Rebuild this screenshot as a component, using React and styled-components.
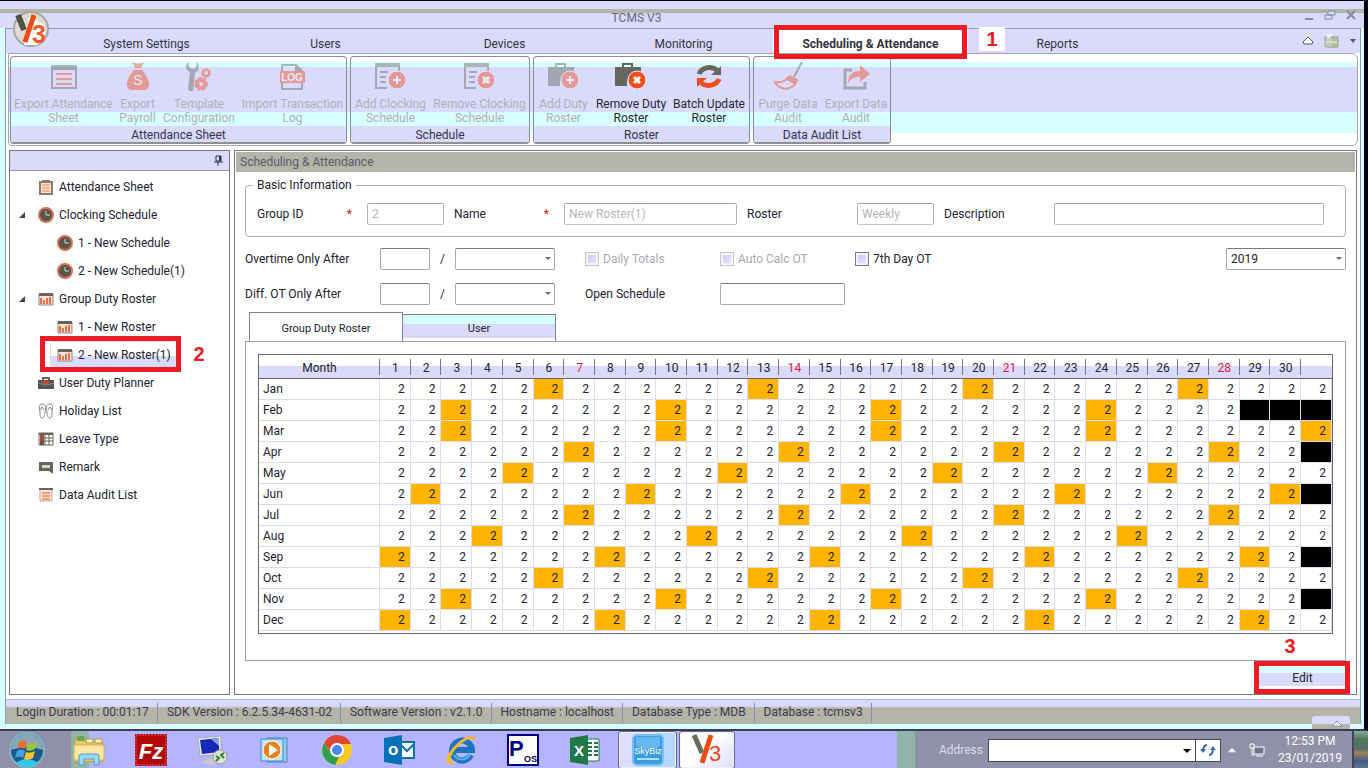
import React, { useState } from "react";
import styled, { createGlobalStyle } from "styled-components";

const GlobalStyle = createGlobalStyle`
  * { box-sizing: border-box; }
  body {
    margin: 0;
    background: #fff;
  }
  body, button, input, select, table {
    font-family: Roboto, "Noto Sans", sans-serif;
    font-size: 12px;
    line-height: 14px;
    color: #222230;
  }
  button { padding: 0; border: 0; background: none; }
`;

const Desktop = styled.div`
  min-height: 100vh;
  display: flex;
  flex-direction: column;
`;

const Window = styled.div`
  flex: 1;
  display: flex;
  flex-direction: column;
  position: relative;
  border-top: 1px solid #000;
  border-right: 4px solid #000010;
  border-bottom: 2px solid #3c3c58;
  background: #d8ffff;
`;

const TitleBar = styled.header`
  height: 27px;
  display: flex;
  align-items: flex-end;
  padding: 0 7px 1px 0;
  background: linear-gradient(#dadafc 8px, #b4b4a8 8px, #b4b4a8 12px, #c8dce8 12px, #dadafc 14px);
`;

const Title = styled.h1`
  flex: 1;
  margin: 0;
  text-align: center;
  font-size: 12px;
  line-height: 18px;
  font-weight: normal;
  color: #66667a;
`;

const WindowButtons = styled.div`
  width: 84px;
  display: flex;
  justify-content: flex-end;
  gap: 9px;
  padding-bottom: 6px;
  button { height: 12px; }
  svg { display: block; }
`;

const Logo = styled.div`
  position: absolute;
  left: 12px;
  top: 8px;
  z-index: 2;
`;

const Frame = styled.div`
  flex: 1;
  display: flex;
  flex-direction: column;
  margin: 0 3px 5px 5px;
  border: solid #9898ac;
  border-width: 1px 1px 0 1px;
  background: #fff;
`;

const Nav = styled.nav`
  display: flex;
  height: 24px;
  padding-left: 51px;
  background: #dadafc;
`;

const NavTab = styled.button`
  position: relative;
  width: ${(p) => (p.$active ? "195px" : "179px")};
  padding-top: 5px;
  font-weight: ${(p) => (p.$active ? "bold" : "normal")};
  background: ${(p) => (p.$active ? "#fff" : "none")};
  color: #33333f;
`;

const RedFrame = styled.span`
  position: absolute;
  inset: ${(p) => p.$inset};
  border: 5px solid #ed1c24;
  z-index: 1;
  pointer-events: none;
`;

const Callout = styled.span`
  position: absolute;
  top: ${(p) => p.$top};
  left: ${(p) => p.$left};
  width: 26px;
  font: bold 20px/24px "Liberation Sans", Arial, sans-serif;
  text-align: center;
  color: #ed1c24;
  background: #fff;
`;

const NavTools = styled.div`
  margin-left: auto;
  display: flex;
  align-items: center;
  gap: 10px;
  padding-right: 3px;
`;

const Ribbon = styled.div`
  display: flex;
  gap: 3px;
  height: 93px;
  margin: 0 2px;
  padding: 2px 1px 1px;
  border: 1px solid #a4a4b4;
  border-radius: 0 6px 6px 4px;
  background: linear-gradient(#fff 8px, #d8ffff 8px, #d8ffff 13px, #dadafc 13px, #dadafc 58px, #d8ffff 58px, #d8ffff 79px, #fff 79px);
`;

const RibbonGroup = styled.section`
  display: flex;
  flex-direction: column;
  border: 1px solid #8c8c98;
  border-bottom: 2px solid #90908c;
  border-radius: 4px;
  h2 {
    margin: 0;
    padding-top: 2px;
    font-size: 12px;
    line-height: 14px;
    font-weight: normal;
    text-align: center;
    background: #dadafc;
    color: #33334a;
  }
`;

const RibbonRow = styled.div`
  flex: 1;
  display: flex;
`;

const RibbonButton = styled.button`
  width: ${(p) => p.$w}px;
  display: flex;
  flex-direction: column;
  align-items: center;
  gap: 4px;
  padding-top: 4px;
  white-space: pre;
  color: #26262e;
  &:disabled { color: #b0b0b4; }
  &:disabled svg { opacity: 0.45; }
`;

const Main = styled.main`
  flex: 1;
  display: flex;
  gap: 4px;
  padding: 4px 3px;
`;

const Panel = styled.div`
  border: 1px solid #77778c;
  background: #fff;
`;

const Sidebar = styled(Panel)`
  width: 221px;
  flex: none;
`;

const SidebarTop = styled.div`
  height: 20px;
  display: flex;
  justify-content: flex-end;
  padding: 4px 6px;
  border-bottom: 1px solid #9898ac;
  background: #dadafc;
`;

const Tree = styled.ul`
  list-style: none;
  margin: 2px 0 0;
  padding: 0 0 0 8px;
`;

const TreeItem = styled.li`
  position: relative;
  height: 28px;
  display: flex;
  align-items: center;
  padding-left: ${(p) => (p.$child ? 33 : 0)}px;
`;

const Arrow = styled.span`
  width: 20px;
  svg { display: block; }
`;

const TreeButton = styled.button`
  height: 27px;
  display: flex;
  align-items: center;
  gap: 5px;
  padding: 0 5px 0 ${(p) => (p.$child ? 6 : 0)}px;
  border-radius: 4px;
  background: ${(p) => (p.$on ? "linear-gradient(#fff 14px, #dadafc 14px)" : "none")};
  box-shadow: ${(p) => (p.$on ? "0 0 0 1px #dcdce8" : "none")};
`;

const Content = styled(Panel)`
  flex: 1;
  min-width: 0;
  padding: 1px;
  display: flex;
  flex-direction: column;
`;

const ContentTitle = styled.h2`
  margin: 0;
  padding: 1px 4px 0;
  font-size: 12px;
  line-height: 19px;
  font-weight: normal;
  background: #b4b4a8;
  color: #5a5a6c;
`;

const ContentBody = styled.div`
  flex: 1;
  display: flex;
  flex-direction: column;
  padding: 5px 9px 0;
`;

const BasicInfo = styled.fieldset`
  margin: 0;
  padding: 9px 21px 11px 1px;
  border: 1px solid #b0b0b4;
  border-radius: 4px;
  legend {
    margin-left: 6px;
    padding: 0 4px;
    line-height: 17px;
  }
`;

const InfoGrid = styled.div`
  display: grid;
  grid-template-columns: 120px 77px 120px 173px 120px 77px 120px 1fr;
  align-items: center;
  label {
    display: flex;
    justify-content: space-between;
    padding: 0 15px 0 10px;
  }
  em { color: #e01020; font-style: normal; }
`;

const TextBox = styled.input`
  width: 100%;
  min-width: 0;
  height: 22px;
  padding: 0 4px;
  border: 1px solid #a8a8ac;
  border-top-color: #77777c;
  border-radius: 2px;
  background: #fff;
  &:disabled {
    color: #b4b4bc;
    border-color: #a0a0a4 #b4b4ac #c8c8b4;
  }
`;

const OpenScheduleBox = styled(TextBox)`
  width: 125px;
`;

const OptionGrid = styled.div`
  display: grid;
  grid-template-columns: 135px 50px 25px 100px 30px 135px 135px 1fr 120px;
  row-gap: 13px;
  align-items: center;
  margin-top: 11px;
`;

const Slash = styled.span`
  text-align: center;
`;

const SelectBox = styled.div`
  position: relative;
  select {
    appearance: none;
    width: 100%;
    height: 22px;
    padding: 0 4px;
    border: 1px solid #a8a8ac;
    border-top-color: #77777c;
    border-radius: 2px;
    background: #fff;
    display: block;
  }
  &::after {
    content: "";
    position: absolute;
    right: 4px;
    top: 9px;
    border: 3px solid transparent;
    border-top-color: #66666c;
    pointer-events: none;
  }
`;

const Check = styled.label`
  display: flex;
  align-items: center;
  gap: 4px;
  color: ${(p) => (p.$off ? "#a8a8b0" : "#222230")};
  input {
    appearance: none;
    width: 14px;
    height: 14px;
    margin: 0;
    border: 1px solid ${(p) => (p.$off ? "#c8c8c0" : "#77778c")};
    background: linear-gradient(135deg, #c8c8f4, #e8e8ff);
    box-shadow: inset 0 0 0 2px #f4f4fc;
  }
`;

const TabStrip = styled.div`
  display: flex;
  align-items: flex-end;
  height: 29px;
  margin-top: 7px;
  padding-left: 4px;
`;

const Tab = styled.button`
  width: 154px;
  height: ${(p) => (p.$on ? 30 : 27)}px;
  margin-bottom: ${(p) => (p.$on ? -1 : 0)}px;
  padding-top: 2px;
  font-size: 11px;
  border: 1px solid #80809c;
  border-bottom: 0;
  background: ${(p) => (p.$on ? "#fff" : "linear-gradient(#d8ffff 9px, #dadafc 9px, #dadafc 23px, #fff 23px)")};
  & + & { margin-left: -1px; }
`;

const TabBody = styled.div`
  flex: 1;
  padding: 12px 12px 26px;
  border: 1px solid #9c9cb4;
`;

const RosterFrame = styled.div`
  padding-bottom: 2px;
  border: 1px solid #66666c;
`;

const Roster = styled.table`
  width: 100%;
  table-layout: fixed;
  border-collapse: separate;
  border-spacing: 0;
  thead th {
    height: 24px;
    padding: 2px 0 0;
    font-weight: normal;
    border-bottom: 1px solid #66666c;
    background: linear-gradient(#77777f, #77777f) right 4px / 1px 16px no-repeat,
      linear-gradient(#fff 11px, #dadafc 11px);
  }
  thead th:last-child { background: linear-gradient(#fff 11px, #dadafc 11px); }
  th:first-child { width: 121px; }
  tbody th {
    padding: 0 4px;
    text-align: left;
    font-weight: normal;
    border: solid #dcdcec;
    border-width: 0 1px 1px 0;
  }
`;

const DayHead = styled.th`
  color: ${(p) => (p.$red ? "#e01838" : "#222230")};
`;

const Day = styled.td`
  height: 21px;
  padding: 0 5px 0 0;
  text-align: right;
  border: solid #dcdcec;
  border-width: 0 1px 1px 0;
  background: ${(p) => (p.$none ? "#000" : p.$rest ? "#ffb400" : "#fff")};
`;

const Actions = styled.div`
  display: flex;
  justify-content: flex-end;
  padding: 6px 0 4px;
`;

const EditWrap = styled.div`
  position: relative;
`;

const EditButton = styled.button`
  display: block;
  width: 87px;
  height: 22px;
  background: linear-gradient(#d8ffff 6px, #dadafc 6px, #dadafc 19px, #fff 19px);
`;

const StatusBar = styled.footer`
  position: relative;
  display: flex;
  height: 25px;
  padding-left: 1px;
  border-top: 1px solid #b8b8c4;
  background: linear-gradient(#dadafc 6px, #b4b4a8 8px);
  color: #3a3a48;
  span {
    height: 20px;
    margin-top: 3px;
    padding: 2px 8px 0 9px;
    border-right: 1px solid #8c8ca8;
  }
`;

const StatusTab = styled.button`
  position: absolute;
  right: 10px;
  bottom: -5px;
  width: 38px;
  height: 13px;
  border-radius: 3px 3px 0 0;
  background: linear-gradient(#dadafc 8px, #b4b4a8 8px);
  svg { display: block; margin-left: 19px; }
`;

const Taskbar = styled.div`
  height: 38px;
  flex: none;
  display: flex;
  background: #b4b4ff;
`;

const Start = styled.button`
  width: 89px;
  padding-left: 8px;
  text-align: left;
  background: linear-gradient(90deg, #9090a8 71px, #90b4a8 71px);
  svg { display: block; }
`;

const Pinned = styled.button`
  width: 62px;
  display: flex;
  align-items: center;
  justify-content: center;
`;

const PinnedList = styled.div`
  display: flex;
  flex: 1;
  margin-left: -31px;
`;

const Running = styled.button`
  width: ${(p) => (p.$front ? 56 : 59)}px;
  margin-left: 2px;
  display: flex;
  align-items: center;
  justify-content: center;
  border: 1px solid #66668c;
  border-radius: 3px;
  box-shadow: inset 0 0 0 1px #f0f0ff;
  background: ${(p) => (p.$front ? "linear-gradient(135deg, #fff 45%, #dcdcff)" : "linear-gradient(115deg, #dcdcff 50%, #b4d8ff 52%)")};
`;

const Tray = styled.div`
  display: flex;
  align-items: center;
  padding-left: 42px;
  background: linear-gradient(90deg, #90b4a8 18px, #9090a8 18px);
  color: #fff;
  label { color: #dcdcf0; margin-right: 5px; }
`;

const AddressBox = styled.div`
  position: relative;
  display: flex;
  height: 23px;
  border: 1px solid #44445c;
  background: #fff;
  input { width: 206px; border: 0; padding: 0 4px; }
  button { width: 25px; border-left: 1px solid #44445c; }
  svg { display: block; margin: auto; }
  &::after {
    content: "";
    position: absolute;
    right: 29px;
    top: 9px;
    border: 4px solid transparent;
    border-top-color: #000;
  }
`;

const TrayIcon = styled.button`
  margin-left: ${(p) => p.$gap}px;
  svg { display: block; }
`;

const Clock = styled.time`
  width: 84px;
  margin-left: 3px;
  text-align: center;
  line-height: 17px;
  white-space: pre-line;
`;

const ShowDesktop = styled.button`
  align-self: stretch;
  width: 16px;
  border-left: 2px solid #44445c;
  background: linear-gradient(#90a8a8, #4c7c58 8px, #5a6c70 18px, #98845c 22px, #48588c 30px, #5c7c88);
`;

const D = "#66665c";
const R = "#ee4e1c";

// 32px ribbon drawings
const ribbonArt = {
  sheet: (
    <>
      <path d="M4 5h24v22H4z" fill="none" stroke={D} strokeWidth="2" />
      <path d="M3 4h26v5H3z" fill={D} />
      <path d="M8 13h16M8 18h16M8 23h16" stroke={R} strokeWidth="2" />
    </>
  ),
  payroll: (
    <>
      <path d="M10 1q6 3 12 0l-3 6h-6z" fill={R} />
      <path d="M12 9h8c4 5 7 9 7 15 0 4-3 5-6 5H11c-3 0-6-1-6-5 0-6 3-10 7-15z" fill={R} />
      <text x="16" y="24" fontSize="14" textAnchor="middle" fill="#fff" fontFamily="Liberation Sans">S</text>
    </>
  ),
  tools: (
    <>
      <path d="M5 1c-3 3-3 8 2 10l-2 17q1 3 5 2l2-18c4-2 5-7 2-11l-1 6-4 1-3-2z" fill={D} />
      <circle cx="23" cy="12" r="3" fill="none" stroke={R} strokeWidth="2" />
      <circle cx="23" cy="12" r="4" fill="none" stroke={R} strokeWidth="2" strokeDasharray="2 1" />
      <circle cx="18" cy="23" r="4" fill="none" stroke={R} strokeWidth="4" />
      <circle cx="18" cy="23" r="6" fill="none" stroke={R} strokeWidth="2" strokeDasharray="3 2" />
    </>
  ),
  log: (
    <>
      <path d="M5 11V4h14l6 6M5 20v8h20v-8" fill="none" stroke={D} strokeWidth="2" />
      <path d="M18 4v7h7z" fill={D} />
      <rect x="3" y="10" width="25" height="12" rx="1" fill={R} />
      <text x="15" y="20" fontSize="10" fontWeight="bold" textAnchor="middle" fill="#fff" fontFamily="Liberation Sans">LOG</text>
    </>
  ),
  schedule: (
    <>
      <path d="M1 5v22h11M24 4v6" fill="none" stroke={D} strokeWidth="2" />
      <path d="M0 2h25v4H0z" fill={D} />
      <path d="M5 11h8M5 16h6M5 21h6" stroke={D} strokeWidth="2" />
    </>
  ),
  bag: (
    <>
      <path d="M8 7V3h9v4" fill="none" stroke={D} strokeWidth="2" />
      <path d="M0 6h26v6Q11 10 12 25H0z" fill={D} />
    </>
  ),
  update: (
    <>
      <path d="M6 13a11 9 0 0 1 18-4" fill="none" stroke={D} strokeWidth="5" />
      <path d="M28 5v9h-10z" fill={D} />
      <path d="M26 18a11 9 0 0 1-18 4" fill="none" stroke={R} strokeWidth="5" />
      <path d="M4 26v-9h10z" fill={R} />
    </>
  ),
  purge: (
    <>
      <path d="M30 1l-8 15" stroke={D} strokeWidth="2" />
      <path d="M18 15l7 4c-2 7-9 10-15 8-3-1-6-3-7-6 5 1 11-1 15-6z" fill="none" stroke={R} strokeWidth="2" />
      <path d="M16 15l10 5-3 4-10-6z" fill={R} />
    </>
  ),
  share: (
    <>
      <path d="M12 9H5v18h20v-6" fill="none" stroke={D} strokeWidth="3" />
      <path d="M8 22c0-9 5-12 12-12V4l10 9-10 8v-5c-5 0-9 1-12 6z" fill={R} />
    </>
  ),
};

const RibbonIcon = ({ name, mark }) => (
  <svg width="32" height="32" viewBox="0 0 32 32">
    {ribbonArt[name]}
    {mark && <circle cx="22" cy="19" r="9" fill={R} stroke="#f0f0ff" strokeWidth="1" />}
    {mark == "plus" && <path d="M18 19h8M22 15v8" stroke="#fff" strokeWidth="2" />}
    {mark == "cross" && <path d="M19 16l6 6M25 16l-6 6" stroke="#fff" strokeWidth="3" />}
  </svg>
);

const treeArt = {
  clip: (
    <>
      <path d="M2 3h12v12H2z" fill="#ffe0c8" stroke="#88806c" strokeWidth="2" />
      <path d="M4 1h8v3H4z" fill="#88806c" />
      <path d="M4 6h8M4 9h8M4 12h8" stroke="#f09068" />
    </>
  ),
  clock: (
    <>
      <circle cx="8" cy="8" r="7" fill="#56564c" stroke="#d8704c" strokeWidth="2" />
      <path d="M8 4v4h4" fill="none" stroke="#c8d8d8" />
    </>
  ),
  roster: (
    <>
      <path d="M1 3h14v11H1z" fill="#ffe4d8" stroke="#888880" />
      <path d="M1 2h14v3H1z" fill={D} />
      <path d="M3 7v6M6 9v4M9 7v6M12 6v7" stroke="#f06c48" strokeWidth="2" />
    </>
  ),
  bag: (
    <>
      <path d="M5 5V3h6v2" fill="none" stroke={D} strokeWidth="2" />
      <path d="M0 5h16v9H0z" fill="#56564c" />
      <path d="M0 8l8 2 8-2" fill="none" stroke="#88887c" />
      <path d="M5 6h6v3H5z" fill="#c84c30" />
    </>
  ),
  flip: (
    <>
      <path d="M4 1c4 0 4 4 3 8 0 4-1 6-3 6s-2-3-2-6C1 5 1 1 4 1zM12 1c-4 0-4 4-3 8 0 4 1 6 3 6s2-3 2-6c1-4 1-8-2-8z" fill="#fff" stroke="#88887c" />
      <path d="M2 7l2-3 2 3M10 7l2-3 2 3" fill="none" stroke="#88887c" />
    </>
  ),
  leave: (
    <>
      <path d="M1 2h14v12H1z" fill="#fff" stroke={D} />
      <path d="M1 2h14v2H1z" fill={D} />
      <path d="M2 4h4v6H2z" fill="#a8503c" />
      <path d="M2 10h4v4H2z" fill="#56564c" />
      <path d="M7 4v10M11 4v10M6 7h9M6 10h9" stroke={D} />
    </>
  ),
  remark: (
    <>
      <path d="M1 3h14v12l-4-3H1z" fill={D} />
      <path d="M4 6h8v3H4z" fill="#d8d8cc" />
    </>
  ),
  list: (
    <>
      <path d="M2 2h12v12H2z" fill="#ffe8d8" stroke="#c8a890" />
      <path d="M1 1h14v2H1z" fill={D} />
      <path d="M4 6h8M4 9h8M4 12h8" stroke={R} />
    </>
  ),
};

const V3Mark = () => (
  <svg width="32" height="32" viewBox="0 0 32 32">
    <path d="M3 1l8 18" stroke="#6c6c5c" strokeWidth="5" />
    <path d="M20 1L11 29" stroke="#f04a14" strokeWidth="5" />
    <text x="18" y="27" fontSize="22" fill="#f04a14" fontFamily="Liberation Sans">3</text>
  </svg>
);

const groups = [
  {
    title: "Attendance Sheet",
    items: [
      ["Export Attendance\nSheet", "sheet", 105],
      ["Export\nPayroll", "payroll", 43],
      ["Template\nConfiguration", "tools", 80],
      ["Import Transaction\nLog", "log", 107],
    ],
  },
  {
    title: "Schedule",
    items: [
      ["Add Clocking\nSchedule", "schedule", 79, "plus"],
      ["Remove Clocking\nSchedule", "schedule", 99, "cross"],
    ],
  },
  {
    title: "Roster",
    items: [
      ["Add Duty\nRoster", "bag", 59, "plus"],
      ["Remove Duty\nRoster", "bag", 76, "cross", true],
      ["Batch Update\nRoster", "update", 80, "", true],
    ],
  },
  {
    title: "Data Audit List",
    items: [
      ["Purge Data\nAudit", "purge", 68],
      ["Export Data\nAudit", "share", 68],
    ],
  },
];

const tree = [
  { text: "Attendance Sheet", icon: "clip" },
  { text: "Clocking Schedule", icon: "clock", open: true },
  { text: "1 - New Schedule", icon: "clock", child: true },
  { text: "2 - New Schedule(1)", icon: "clock", child: true },
  { text: "Group Duty Roster", icon: "roster", open: true },
  { text: "1 - New Roster", icon: "roster", child: true },
  { text: "2 - New Roster(1)", icon: "roster", child: true },
  { text: "User Duty Planner", icon: "bag" },
  { text: "Holiday List", icon: "flip" },
  { text: "Leave Type", icon: "leave" },
  { text: "Remark", icon: "remark" },
  { text: "Data Audit List", icon: "list" },
];

const navTabs = ["System Settings", "Users", "Devices", "Monitoring", "Scheduling & Attendance", "Reports"];
const months = ["Jan", "Feb", "Mar", "Apr", "May", "Jun", "Jul", "Aug", "Sep", "Oct", "Nov", "Dec"];
const days = Array.from({ length: 31 }, (_, i) => i + 1);
const status = [
  "Login Duration : 00:01:17",
  "SDK Version : 6.2.5.34-4631-02",
  "Software Version : v2.1.0",
  "Hostname : localhost",
  "Database Type : MDB",
  "Database : tcmsv3",
];

const apps = [
  ["Explorer", (
    <>
      <path d="M2 5h9l2 3h16v20H2z" fill="#e8cc70" stroke="#b89848" />
      <path d="M4 2h7v5H4z" fill="#6ca850" />
      <path d="M13 5h7v4h-7zM22 5h7v4h-7z" fill="#fff0b0" stroke="#b89848" />
      <path d="M1 11h30v15H1z" fill="#fce8a0" stroke="#d0b060" />
      <path d="M6 31v-9q0-2 2-2h16q2 0 2 2v9h-5v-6H11v6z" fill="#98d8f8" stroke="#5898c8" />
    </>
  )],
  ["FileZilla", (
    <>
      <rect width="32" height="32" fill="#b40808" />
      <rect x="1" y="1" width="30" height="30" fill="none" stroke="#d86868" strokeDasharray="2 1" />
      <text x="16" y="25" fontSize="22" fontWeight="bold" fontStyle="italic" textAnchor="middle" fill="#fff" fontFamily="Liberation Sans">Fz</text>
    </>
  )],
  ["Remote Desktop", (
    <>
      <ellipse cx="15" cy="28" rx="10" ry="3" fill="#c8c8cc" />
      <path d="M1 4l23-2v18L3 22z" fill="#e8e8f0" stroke="#a8a8c0" />
      <path d="M3 6l19-2v14L5 20z" fill="#1828b8" />
      <path d="M14 5l8-1v8z" fill="#88a0f0" />
      <circle cx="23" cy="23" r="7" fill="#dce4dc" stroke="#909c90" />
      <path d="M19 22l3 2-3 3M27 19l-3 2 3 3" fill="none" stroke="#308030" strokeWidth="2" />
    </>
  )],
  ["Media Player", (
    <>
      <path d="M8 4h20v24H8z" fill="#90c8f0" stroke="#4888b8" />
      <path d="M2 5h22v22H2z" fill="#b8e4fc" stroke="#4888b8" />
      <circle cx="13" cy="16" r="9" fill="#f08018" stroke="#fff" />
      <path d="M10 10l9 6-9 6z" fill="#fff" />
    </>
  )],
  ["Chrome", (
    <>
      <circle cx="16" cy="16" r="15" fill="#f8c828" />
      <path d="M3 9A15 15 0 0 1 30 10H16a6 6 0 0 0-6 8z" fill="#e04438" />
      <path d="M3 9L11 20a6 6 0 0 0 8 1l-5 10A15 15 0 0 1 3 9z" fill="#30a050" />
      <circle cx="16" cy="16" r="7" fill="#fff" />
      <circle cx="16" cy="16" r="5" fill="#4488f0" />
    </>
  )],
  ["Outlook", (
    <>
      <path d="M17 8h14v16H17z" fill="#fff" stroke="#0870b8" strokeWidth="2" />
      <path d="M17 10l7 7 7-7" fill="none" stroke="#0870b8" strokeWidth="2" />
      <path d="M1 4l18-3v30L1 28z" fill="#0870b8" />
      <text x="5" y="21" fontSize="17" fontWeight="bold" fill="#fff" fontFamily="Liberation Sans">o</text>
    </>
  )],
  ["Internet Explorer", (
    <>
      <path d="M26 21A10 10 0 1 1 27 16H10" fill="none" stroke="#1c74c0" strokeWidth="6" />
      <path d="M25 20A9 9 0 0 1 9 21" fill="none" stroke="#58b4f0" strokeWidth="2" />
      <path d="M3 29C-2 24 10 8 22 3c8-3 8 1 6 5 0-5-4-3-8-1C12 12 4 22 6 27c1 2 4 1 7-1-4 4-8 5-10 3z" fill="#f4b820" />
    </>
  )],
  ["POS", (
    <>
      <rect x="1" y="1" width="30" height="30" fill="#fff" stroke="#000080" strokeWidth="2" />
      <text x="2" y="22" fontSize="22" fontWeight="bold" fill="#000080" fontFamily="Liberation Sans">P</text>
      <text x="17" y="28" fontSize="9" fontWeight="bold" fill="#000040" fontFamily="Liberation Sans">OS</text>
    </>
  )],
  ["Excel", (
    <>
      <path d="M16 5h14v22H16z" fill="#fff" stroke="#207848" />
      <path d="M19 9h4M19 13h4M19 17h4M19 21h4M25 9h4M25 13h4M25 17h4M25 21h4" stroke="#207848" strokeWidth="2" />
      <path d="M1 4l18-3v30L1 28z" fill="#207848" />
      <text x="5" y="22" fontSize="15" fontWeight="bold" fill="#fff" fontFamily="Liberation Sans">X</text>
    </>
  )],
];

const Calendar = () => (
  <RosterFrame>
    <Roster>
      <thead>
        <tr>
          <th>Month</th>
          {days.map((d) => (
            <DayHead key={d} $red={d % 7 == 0}>{d < 31 ? d : ""}</DayHead>
          ))}
        </tr>
      </thead>
      <tbody>
        {months.map((m, i) => (
          <tr key={m}>
            <th>{m}</th>
            {days.map((d) => {
              const date = new Date(2019, i, d);
              const none = date.getMonth() != i;
              return (
                <Day key={d} $none={none} $rest={date.getDay() == 0}>{none ? "" : "2"}</Day>
              );
            })}
          </tr>
        ))}
      </tbody>
    </Roster>
  </RosterFrame>
);

const App = () => {
  const [tab, setTab] = useState("Group Duty Roster");
  const [year, setYear] = useState("2019");

  return (
    <Desktop>
      <GlobalStyle />
      <Window>
        <TitleBar>
          <Title>TCMS V3</Title>
          <WindowButtons>
            <button aria-label="Minimize"><svg width="12" height="12"><path d="M2 10h8" stroke="#8888a0" strokeWidth="2" /></svg></button>
            <button aria-label="Restore"><svg width="12" height="12"><path d="M4 2h7v4H4zM1 6h7v4H1z" fill="#dadafc" stroke="#7c8c9c" /></svg></button>
            <button aria-label="Close"><svg width="12" height="12"><path d="M2 2l8 8M10 2l-8 8" stroke="#8888a0" strokeWidth="2" /></svg></button>
          </WindowButtons>
        </TitleBar>
        <Logo>
          <svg width="39" height="42" viewBox="0 0 39 42">
            <circle cx="19" cy="20" r="17" fill="#dcdcd0" stroke="#a8a8a4" strokeWidth="2" />
            <path d="M17 8l16 8v12l-8 8H12z" fill="#fff" />
            <path d="M6 6l6 15" stroke="#505048" strokeWidth="6" />
            <path d="M22 6l-9 27" stroke="#f04a14" strokeWidth="5" />
            <text x="20" y="34" fontSize="25" fontWeight="bold" fill="#f05a2c" fontFamily="Liberation Sans">3</text>
          </svg>
        </Logo>

        <Frame>
          <Nav>
            {navTabs.map((t) => {
              const on = t == "Scheduling & Attendance";
              return (
                <NavTab key={t} $active={on}>
                  {t}
                  {on && <RedFrame $inset="-4px 1px -6px 1px" />}
                  {on && <Callout $top="-2px" $left="206px">1</Callout>}
                </NavTab>
              );
            })}
            <NavTools>
              <svg width="12" height="10"><path d="M1 6l5-5 5 5-1 2H2z" fill="#fff" stroke="#55555c" /></svg>
              <svg width="15" height="16"><path d="M1 4h8v10H1z" fill="#c8c8c0" stroke="#98a890" /><path d="M3 1h5v4H3z" fill="#f4f4f4" /><path d="M7 4h7v10H7z" fill="#b4c0a8" stroke="#90a080" /><path d="M2 9h11M7 5v9" stroke="#e8ece0" /></svg>
              <svg width="8" height="6"><path d="M1 1h6L4 5z" fill="#55556c" /></svg>
            </NavTools>
          </Nav>

          <Ribbon>
            {groups.map((g) => (
              <RibbonGroup key={g.title}>
                <RibbonRow>
                  {g.items.map(([text, icon, w, mark, enabled]) => (
                    <RibbonButton key={text} $w={w} disabled={!enabled}>
                      <RibbonIcon name={icon} mark={mark} />
                      {text}
                    </RibbonButton>
                  ))}
                </RibbonRow>
                <h2>{g.title}</h2>
              </RibbonGroup>
            ))}
          </Ribbon>

          <Main>
            <Sidebar as="aside">
              <SidebarTop>
                <svg width="9" height="11"><path d="M2 1h5v5H2zM0 7h9M4 7v4" fill="none" stroke="#33334a" /><path d="M5 1h2v5H5z" fill="#33334a" /></svg>
              </SidebarTop>
              <Tree>
                {tree.map((n) => {
                  const on = n.text == "2 - New Roster(1)";
                  return (
                    <TreeItem key={n.text} $child={n.child}>
                      {!n.child && (
                        <Arrow>{n.open && <svg width="8" height="8"><path d="M7 1v6H1z" fill="#44444c" /></svg>}</Arrow>
                      )}
                      <TreeButton $child={n.child} $on={on}>
                        <svg width="16" height="16" viewBox="0 0 16 16">{treeArt[n.icon]}</svg>
                        {n.text}
                      </TreeButton>
                      {on && <RedFrame $inset="-5px 48px -3px 22px" />}
                      {on && <Callout $top="1px" $left="168px">2</Callout>}
                    </TreeItem>
                  );
                })}
              </Tree>
            </Sidebar>

            <Content>
              <ContentTitle>Scheduling &amp; Attendance</ContentTitle>
              <ContentBody>
                <BasicInfo>
                  <legend>Basic Information</legend>
                  <InfoGrid>
                    <label htmlFor="groupId">Group ID <em>*</em></label>
                    <TextBox id="groupId" defaultValue="2" disabled />
                    <label htmlFor="name">Name <em>*</em></label>
                    <TextBox id="name" defaultValue="New Roster(1)" disabled />
                    <label htmlFor="roster">Roster</label>
                    <TextBox id="roster" defaultValue="Weekly" disabled />
                    <label htmlFor="description">Description</label>
                    <TextBox id="description" disabled />
                  </InfoGrid>
                </BasicInfo>

                <OptionGrid>
                  <label htmlFor="overtime">Overtime Only After</label>
                  <TextBox id="overtime" />
                  <Slash>/</Slash>
                  <SelectBox><select aria-label="Overtime unit"><option></option></select></SelectBox>
                  <span />
                  <Check $off><input type="checkbox" disabled />Daily Totals</Check>
                  <Check $off><input type="checkbox" disabled />Auto Calc OT</Check>
                  <Check><input type="checkbox" />7th Day OT</Check>
                  <SelectBox>
                    <select aria-label="Year" value={year} onChange={(e) => setYear(e.target.value)}>
                      <option>2019</option>
                      <option>2020</option>
                    </select>
                  </SelectBox>
                  <label htmlFor="diff">Diff. OT Only After</label>
                  <TextBox id="diff" />
                  <Slash>/</Slash>
                  <SelectBox><select aria-label="Diff. OT unit"><option></option></select></SelectBox>
                  <span />
                  <label htmlFor="open">Open Schedule</label>
                  <OpenScheduleBox id="open" />
                </OptionGrid>

                <TabStrip>
                  {["Group Duty Roster", "User"].map((t) => (
                    <Tab key={t} $on={tab == t} onClick={() => setTab(t)}>{t}</Tab>
                  ))}
                </TabStrip>
                <TabBody>
                  <Calendar />
                </TabBody>
                <Actions>
                  <EditWrap>
                    <EditButton>Edit</EditButton>
                    <RedFrame $inset="-6px -4px -5px -5px" />
                    <Callout $top="-33px" $left="18px">3</Callout>
                  </EditWrap>
                </Actions>
              </ContentBody>
            </Content>
          </Main>

          <StatusBar>
            {status.map((s) => <span key={s}>{s}</span>)}
            <StatusTab aria-label="Expand">
              <svg width="12" height="8"><path d="M1 7l5-5 5 5z" fill="#fff" stroke="#8888a8" /></svg>
            </StatusTab>
          </StatusBar>
        </Frame>
      </Window>

      <Taskbar>
        <Start aria-label="Start">
          <svg width="38" height="38" viewBox="0 0 38 38">
            <circle cx="19" cy="19" r="17" fill="#1c5888" stroke="#7cb4c8" strokeWidth="2" />
            <path d="M3 19a16 16 0 0 1 32 0q-16-6-32 0z" fill="#88a8b8" />
            <path d="M8 32q11-8 22 0-11 8-22 0z" fill="#30c8e8" />
            <path d="M11 11q4-3 8 0l-2 7q-4-3-8 0z" fill="#f06c30" />
            <path d="M20 12q4 2 9-1l-2 7q-5 3-9 1z" fill="#98c838" />
            <path d="M9 20q4-3 8 0l-2 7q-4-3-8 0z" fill="#48a0e8" />
            <path d="M18 21q4 2 9-1l-2 7q-5 3-9 1z" fill="#fcc828" />
          </svg>
        </Start>
        <PinnedList>
          {apps.map(([name, art]) => (
            <Pinned key={name} aria-label={name}>
              <svg width="32" height="32" viewBox="0 0 32 32">{art}</svg>
            </Pinned>
          ))}
          <Running aria-label="SkyBiz">
            <svg width="32" height="32" viewBox="0 0 32 32">
              <rect x="1" y="1" width="30" height="30" rx="4" fill="#3c9ce0" stroke="#78c0f0" strokeWidth="2" />
              <path d="M4 3h24v9q-12 6-24 0z" fill="#68b8f0" />
              <text x="16" y="20" fontSize="9" textAnchor="middle" fill="#fff" fontFamily="Liberation Sans">SkyBiz</text>
              <path d="M5 25h22" stroke="#b0e0ff" strokeWidth="2" />
            </svg>
          </Running>
          <Running $front aria-label="TCMS V3"><V3Mark /></Running>
        </PinnedList>
        <Tray>
          <label htmlFor="address">Address</label>
          <AddressBox>
            <input id="address" />
            <button aria-label="Refresh">
              <svg width="16" height="16"><path d="M7 3q-4 0-4 7M9 13q4 0 4-7" fill="none" stroke="#3c68b0" strokeWidth="2" /><path d="M0 7h6l-3 4zM10 8h6l-3-4z" fill="#3c68b0" /></svg>
            </button>
          </AddressBox>
          <TrayIcon $gap={6} aria-label="Show hidden icons"><svg width="10" height="8"><path d="M1 6l4-4 4 4z" fill="#fff" stroke="#c8c8e0" /></svg></TrayIcon>
          <TrayIcon $gap={12} aria-label="Network"><svg width="16" height="16"><path d="M5 5h10v7H5z" fill="#66788c" stroke="#fff" /><path d="M7 14h7M1 2h4v4H1zM3 6v7h3" fill="none" stroke="#fff" /></svg></TrayIcon>
          <Clock>{"12:53 PM\n23/01/2019"}</Clock>
          <ShowDesktop aria-label="Show desktop" />
        </Tray>
      </Taskbar>
    </Desktop>
  );
};

export default App;
